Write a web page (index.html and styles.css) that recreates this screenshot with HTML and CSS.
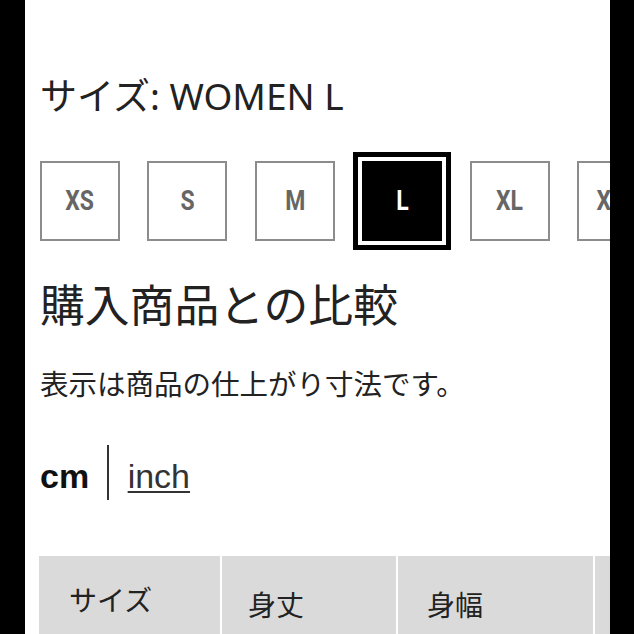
FILE: index.html
```html
<!DOCTYPE html>
<html lang="ja">
<head>
<meta charset="utf-8">
<title>サイズ</title>
<link rel="stylesheet" href="styles.css">
</head>
<body>
<main class="page">
  <h2 class="size-title">サイズ: WOMEN L</h2>
  <div class="sizes">
    <div class="size"><span class="size-label">XS</span></div>
    <div class="size"><span class="size-label">S</span></div>
    <div class="size"><span class="size-label">M</span></div>
    <div class="size selected"><span class="size-label">L</span></div>
    <div class="size"><span class="size-label">XL</span></div>
    <div class="size"><span class="size-label">XXL</span></div>
  </div>
  <h1 class="compare-title">購入商品との比較</h1>
  <p class="note">表示は商品の仕上がり寸法です。</p>
  <div class="units">
    <span class="unit active">cm</span>
    <span class="unit-divider"></span>
    <a class="unit link" href="#">inch</a>
  </div>
  <div class="table">
    <div class="cell c1">サイズ</div>
    <div class="cell c2">身丈</div>
    <div class="cell c3">身幅</div>
    <div class="cell c4">肩幅</div>
  </div>
</main>
</body>
</html>
```

FILE: styles.css
```css
html, body {
  margin: 0;
  padding: 0;
  background: #000;
  height: 634px;
  overflow: hidden;
}

.page {
  margin: 0 24px 0 25px;
  height: 634px;
  background: #fff;
  overflow: hidden;
  padding-left: 15px;
  box-sizing: border-box;
  font-family: "Noto Sans CJK JP", "Noto Sans", sans-serif;
  color: #222;
}

.size-title {
  margin: 0;
  padding-top: 74px;
  font-family: "Noto Sans", "Noto Sans CJK JP", sans-serif;
  font-size: 37px;
  line-height: 44px;
  font-weight: 400;
  white-space: nowrap;
}

.sizes {
  display: flex;
  gap: 27.4px;
  margin-top: 43px;
  padding-bottom: 12px;
}

.size {
  flex: 0 0 80px;
  height: 80px;
  box-sizing: border-box;
  border: 2px solid #8c8c8c;
  display: flex;
  align-items: center;
  justify-content: center;
  color: #666;
}

.size.selected {
  background: #000;
  border-color: #000;
  color: #fff;
  outline: 5px solid #000;
  outline-offset: 4px;
}

.size-label {
  display: inline-block;
  font-family: Roboto, "Liberation Sans", sans-serif;
  font-weight: 700;
  font-size: 28px;
  line-height: 1;
  transform: scaleX(0.82);
}

.compare-title {
  margin: 28px 0 0;
  font-size: 44.8px;
  line-height: 44px;
  font-weight: 400;
  white-space: nowrap;
}

.note {
  margin: 43.5px 0 0;
  font-size: 28.5px;
  line-height: 28px;
  white-space: nowrap;
}

.units {
  display: flex;
  align-items: flex-start;
  height: 55px;
  margin-top: 48px;
  font-family: "Liberation Sans", Arial, sans-serif;
  font-size: 34px;
}

.unit {
  line-height: 62px;
  height: 55px;
}

.unit.active {
  font-weight: 700;
  color: #111;
}

.unit-divider {
  width: 1.5px;
  height: 55px;
  background: #333;
  margin: 0 19px 0 18px;
}

.unit.link {
  color: #333;
  text-decoration: underline;
  text-decoration-thickness: 1.5px;
  text-underline-offset: 3px;
}

.table {
  display: grid;
  grid-template-columns: 181px 174px 195px 195px;
  column-gap: 2px;
  margin-top: 56px;
  margin-left: -1px;
  height: 100px;
}

.cell {
  background: #dadada;
  font-size: 28px;
  line-height: 28px;
  padding-top: 34.5px;
  white-space: nowrap;
  color: #222;
}

.c1 { padding-left: 30px; padding-top: 29.5px; }
.c2 { padding-left: 26px; }
.c3 { padding-left: 29px; }
.c4 { padding-left: 28px; }
```
